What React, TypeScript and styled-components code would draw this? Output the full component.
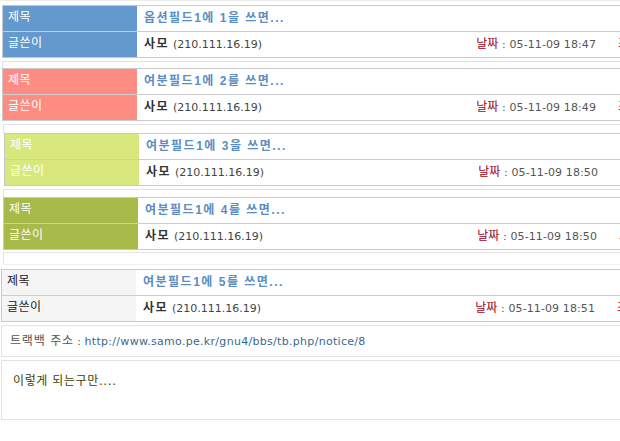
import styled, { createGlobalStyle } from 'styled-components';

const GlobalStyle = createGlobalStyle`
	body {
		margin: 0;
		background: #fff;
		overflow: hidden;
		font-family: "DejaVu Sans", "Noto Sans CJK KR", sans-serif;
		font-size: 12px;
	}
`;

const Pagina = styled.div`
	width: 720px;
	display: flex;
	flex-direction: column;
`;

const LinhaTopo = styled.div`
	border-top: 1px solid #ececec;
	margin-bottom: 4px;
`;

const Post = styled.div<{ $mt: number; $shift: number }>`
	margin: ${(p) => p.$mt}px 0 0 ${(p) => p.$shift}px;
	width: 700px;
	border: 1px solid #c9c9c9;
`;

const Linha = styled.div`
	display: flex;
	height: 25px;
	& + & {
		border-top: 1px solid #cccccc;
	}
`;

const Rotulo = styled.div<{ $bg: string; $fg: string }>`
	width: 134px;
	flex: none;
	box-sizing: border-box;
	padding: 3px 0 0 5px;
	line-height: 17px;
	letter-spacing: 0.5px;
	background: ${(p) => p.$bg};
	color: ${(p) => p.$fg};
`;

const Valor = styled.div`
	flex: 1;
	padding: 4px 0 0 7px;
	line-height: 17px;
	white-space: nowrap;
	overflow: hidden;
`;

const Titulo = styled.span`
	font-family: "Liberation Sans", "Noto Sans CJK KR", sans-serif;
	font-weight: 700;
	letter-spacing: 1.5px;
	color: #5a8dc4;
`;

const Nome = styled.b`
	letter-spacing: 1.5px;
	color: #333;
`;

const Miudo = styled.span`
	font-size: 11px;
`;

const Ip = styled(Miudo)`
	color: #444;
`;

const Data = styled.div`
	padding-top: 4px;
	line-height: 17px;
	color: #555;
	white-space: nowrap;
`;

const Hora = styled(Miudo)`
	letter-spacing: 0.1px;
`;

const Vermelho = styled.span`
	color: #990022;
`;

const Visitas = styled.div`
	width: 107px;
	flex: none;
	box-sizing: border-box;
	padding: 4px 0 0 22px;
	line-height: 17px;
	color: #555;
	white-space: nowrap;
`;

const Resto = styled.div<{ $mt: number; $h: number; $shift: number; $fechado?: boolean }>`
	margin: ${(p) => p.$mt}px 0 0 ${(p) => p.$shift}px;
	width: 700px;
	height: ${(p) => p.$h}px;
	border-top: 1px solid #e2e2e2;
	border-left: 1px solid #e2e2e2;
	border-bottom: ${(p) => (p.$fechado ? '1px solid #f0f0f0' : 'none')};
`;

const Caixa = styled.div<{ $mt: number; $h: number }>`
	margin: ${(p) => p.$mt}px 0 0 1px;
	width: 700px;
	height: ${(p) => p.$h}px;
	border: 1px solid #e3e3e3;
	display: flex;
	line-height: 17px;
`;

const Trackback = styled(Caixa)`
	align-items: center;
	padding-left: 8px;
	color: #555;
	white-space: pre;
`;

const Coreano = styled.span`
	letter-spacing: 0.8px;
`;

const Link = styled(Miudo)`
	letter-spacing: 0.3px;
	color: #3a6890;
`;

const Conteudo = styled(Caixa)`
	padding: 12px 0 0 11px;
	color: #3f3f00;
	letter-spacing: 0.6px;
`;

type Cor = { bg: string; fg: string };

function Cabecalho({
	cor,
	titulo,
	hora,
	mt,
	shift,
}: {
	cor: Cor;
	titulo: string;
	hora: string;
	mt: number;
	shift: number;
}) {
	return (
		<Post $mt={mt} $shift={shift}>
			<Linha>
				<Rotulo $bg={cor.bg} $fg={cor.fg}>제목</Rotulo>
				<Valor>
					<Titulo>{titulo}</Titulo>
				</Valor>
			</Linha>
			<Linha>
				<Rotulo $bg={cor.bg} $fg={cor.fg}>글쓴이</Rotulo>
				<Valor>
					<Nome>사모</Nome> <Ip>(210.111.16.19)</Ip>
				</Valor>
				<Data>
					<Vermelho>날짜</Vermelho> <Hora>: {hora}</Hora>
				</Data>
				<Visitas>
					<Vermelho>조회</Vermelho> <Miudo>: 12</Miudo>
				</Visitas>
			</Linha>
		</Post>
	);
}

export default function App() {
	return (
		<Pagina>
			<GlobalStyle />
			<LinhaTopo />
			<Cabecalho cor={{ bg: '#6399cc', fg: '#fff' }} titulo="옵션필드1에 1을 쓰면..." hora="05-11-09 18:47" mt={0} shift={2} />
			<Resto $mt={3} $h={6} $shift={2} />
			<Cabecalho cor={{ bg: '#ff8c82', fg: '#fff' }} titulo="여분필드1에 2를 쓰면..." hora="05-11-09 18:49" mt={0} shift={2} />
			<Resto $mt={3} $h={8} $shift={3} />
			<Cabecalho cor={{ bg: '#d8e87c', fg: '#fff' }} titulo="여분필드1에 3을 쓰면..." hora="05-11-09 18:50" mt={0} shift={4} />
			<Resto $mt={3} $h={7} $shift={3} />
			<Cabecalho cor={{ bg: '#a8ba4a', fg: '#fff' }} titulo="여분필드1에 4를 쓰면..." hora="05-11-09 18:50" mt={0} shift={3} />
			<Resto $mt={2} $h={11} $shift={3} $fechado />
			<Cabecalho cor={{ bg: '#f5f5f5', fg: '#222' }} titulo="여분필드1에 5를 쓰면..." hora="05-11-09 18:51" mt={4} shift={1} />
			<Trackback $mt={3} $h={30}>
				<Coreano>트랙백 주소</Coreano>
				<Miudo>{' : '}</Miudo>
				<Link>http://www.samo.pe.kr/gnu4/bbs/tb.php/notice/8</Link>
			</Trackback>
			<Conteudo $mt={3} $h={46}>이렇게 되는구만....</Conteudo>
		</Pagina>
	);
}
